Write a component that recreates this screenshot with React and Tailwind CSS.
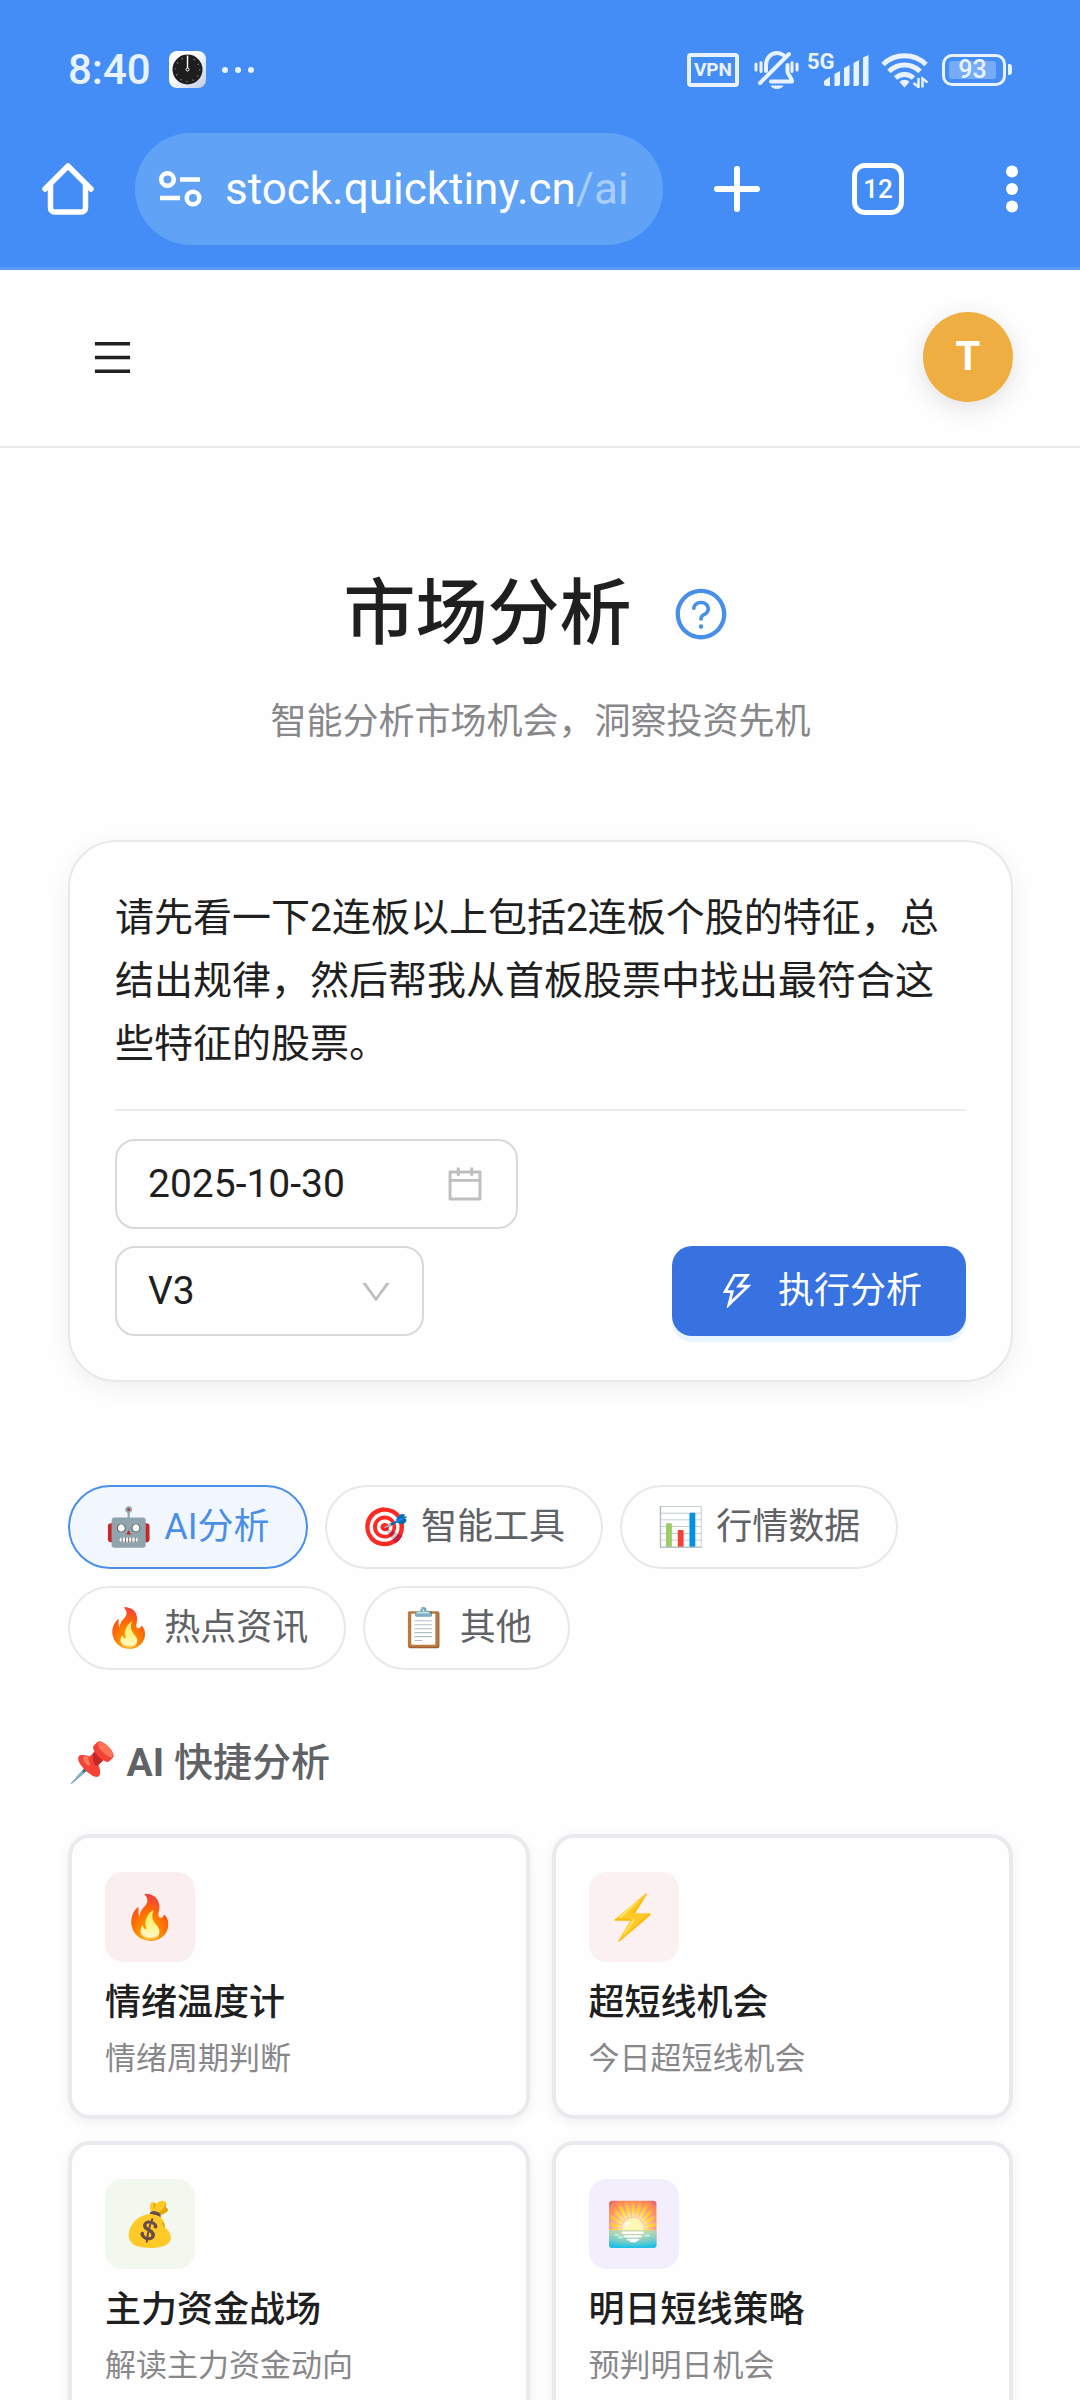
import { useState } from 'react';
import clsx from 'clsx';
import {
  AiOutlineCalendar,
  AiOutlineDown,
  AiOutlineMenu,
  AiOutlineQuestionCircle,
  AiOutlineThunderbolt,
} from 'react-icons/ai';

const tabs = [
  { id: 'ai', icon: '🤖', label: 'AI分析' },
  { id: 'tools', icon: '🎯', label: '智能工具' },
  { id: 'market', icon: '📊', label: '行情数据' },
  { id: 'news', icon: '🔥', label: '热点资讯' },
  { id: 'other', icon: '📋', label: '其他' },
];

const shortcuts = [
  { icon: '🔥', title: '情绪温度计', desc: '情绪周期判断', tint: 'bg-[#fbeeee]' },
  { icon: '⚡', title: '超短线机会', desc: '今日超短线机会', tint: 'bg-[#fbf1f1]' },
  { icon: '💰', title: '主力资金战场', desc: '解读主力资金动向', tint: 'bg-[#f3f8ee]' },
  { icon: '🌅', title: '明日短线策略', desc: '预判明日机会', tint: 'bg-[#f2eefb]' },
];

const ClockIcon = () => (
  <svg width="37" height="37" viewBox="0 0 37 37" aria-hidden="true">
    <defs>
      <linearGradient id="clock-face" x1="0" y1="0" x2="1" y2="1">
        <stop offset="0.4" stopColor="#ffffff" />
        <stop offset="1" stopColor="#bccbe4" />
      </linearGradient>
    </defs>
    <rect width="37" height="37" rx="8" fill="url(#clock-face)" />
    <circle cx="18.500" cy="18.500" r="15" fill="#1e1e1e" />
    <circle cx="18.500" cy="18.500" r="12" fill="none" stroke="#8a8a8a" strokeWidth="1.500" strokeDasharray="1 5.280" />
    <path d="M18.500 17V4.500" stroke="#fff" strokeWidth="1.400" />
    <circle cx="18.500" cy="18.500" r="1.500" fill="none" stroke="#fff" />
  </svg>
);

const MutedBellIcon = () => (
  <svg width="45" height="38" viewBox="0 0 45 38" fill="none" stroke="currentColor" strokeLinecap="round" strokeLinejoin="round" aria-hidden="true">
    <path d="M2 13v6M7 11.500v9M38 11.500v9M43 13v6" strokeWidth="3" />
    <path d="M12 20v-6C12 7 17 2 23 2c3 0 5 1 7 2.500" strokeWidth="4" />
    <path d="M35 3 6 32" strokeWidth="4" />
    <path d="M33.500 14v7c0 2 5 7 4.500 9.500H17" strokeWidth="4" />
    <path d="M16.500 34.500h13c-1 2-3.500 3.500-6.500 3.500s-5.500-1.500-6.500-3.500Z" fill="currentColor" stroke="none" />
  </svg>
);

const SignalIcon = () => (
  <svg width="45" height="34" viewBox="0 0 45 34" fill="currentColor" aria-hidden="true">
    <path d="M0 32v-3l6-4.500V34H2a2 2 0 0 1-2-2ZM10.500 22l5.500-3v13a2 2 0 0 1-2 2h-3.500ZM20 16l5.500-3v19a2 2 0 0 1-2 2H20ZM29.500 11l5.500-3v24a2 2 0 0 1-2 2h-3.500ZM39 5.500l5.500-2.500v29a2 2 0 0 1-2 2H39Z" />
  </svg>
);

const WifiIcon = () => (
  <svg width="47" height="36" viewBox="0 0 47 36" fill="none" stroke="currentColor" strokeWidth="5" aria-hidden="true">
    <path d="M2 12.500a31 31 0 0 1 43 0" />
    <path d="M8 19.500a22 22 0 0 1 31 0" />
    <path d="M14.500 26a13 13 0 0 1 18 0" />
    <path d="M18.500 30c2.500-3 7.500-3 10 0l-5 5.500Z" fill="currentColor" stroke="none" />
    <path d="M37.500 26v9l-5-4M41.500 35.500v-9l5 4" strokeWidth="2.500" />
  </svg>
);

const StatusBar = () => (
  <div className="flex h-[133px] items-center justify-between px-[68px] pt-1.5 text-[#e8f3ff]">
    <div className="flex items-center">
      <span className="text-[42px] leading-none font-medium">8:40</span>
      <span className="ml-[18px]"><ClockIcon /></span>
      <span className="ml-4 flex gap-[7px]">
        <i className="size-1.5 rounded-full bg-current" />
        <i className="size-1.5 rounded-full bg-current" />
        <i className="size-1.5 rounded-full bg-current" />
      </span>
    </div>
    <div className="flex items-center">
      <span className="flex h-[34px] w-[52px] items-center justify-center rounded-[4px] border-4 text-[19px] leading-none font-bold">
        VPN
      </span>
      <span className="ml-[15px]"><MutedBellIcon /></span>
      <span className="ml-2 flex">
        <span className="h-9 w-[17px] text-[22px] leading-5 font-bold whitespace-nowrap">5G</span>
        <SignalIcon />
      </span>
      <span className="ml-3"><WifiIcon /></span>
      <span className="ml-3.5 flex h-8 w-16 rounded-[10px] border-3 p-1">
        <span className="flex w-[47px] items-center justify-center rounded-[3px] bg-[#76abf9] text-[25px] leading-none font-medium">
          93
        </span>
      </span>
      <span className="ml-0.5 h-[11px] w-1 rounded-r-[3px] bg-current" />
    </div>
  </div>
);

const BrowserBar = () => (
  <div className="flex h-28 items-center pr-[50px] pl-[42px] text-white">
    <button type="button" aria-label="主页">
      <svg width="52" height="52" viewBox="0 0 52 52" fill="none" stroke="currentColor" strokeWidth="5.500" strokeLinecap="round" strokeLinejoin="round">
        <path d="M3 26 26 3l23 23" />
        <path d="M8.500 21v24a4 4 0 0 0 4 4h27a4 4 0 0 0 4-4V21" />
      </svg>
    </button>
    <button type="button" className="ml-[41px] flex h-28 min-w-0 flex-1 items-center rounded-full bg-[#60a2f6] pl-6 text-left">
      <svg width="43" height="36" viewBox="0 0 43 36" fill="none" stroke="currentColor" strokeWidth="4.500" aria-hidden="true">
        <circle cx="8.500" cy="8.500" r="6.300" />
        <path d="M21 8.500h20M1 27h20" />
        <circle cx="34" cy="27" r="6.300" />
      </svg>
      <span className="ml-[23px] text-[44px] leading-none whitespace-nowrap">
        stock.quicktiny.cn<span className="text-[#a9cdfb]">/ai</span>
      </span>
    </button>
    <button type="button" aria-label="新标签页" className="ml-[50px]">
      <svg width="48" height="48" viewBox="0 0 48 48" stroke="currentColor" strokeWidth="6" strokeLinecap="round">
        <path d="M24 4v40M4 24h40" />
      </svg>
    </button>
    <button type="button" aria-label="标签页" className="ml-[91px] flex size-[52px] items-center justify-center rounded-[13px] border-[5px] text-[26px] leading-none font-medium">
      12
    </button>
    <button type="button" aria-label="更多" className="ml-[90px]">
      <svg width="36" height="48" viewBox="0 0 36 48" fill="currentColor">
        <circle cx="18" cy="6.500" r="6" />
        <circle cx="18" cy="24" r="6" />
        <circle cx="18" cy="41.500" r="6" />
      </svg>
    </button>
  </div>
);

const SiteHeader = () => (
  <header className="flex h-[178px] shrink-0 items-center justify-between border-b-2 border-[#e8e8ea] pr-[67px] pb-0.5 pl-[90px]">
    <button type="button" aria-label="菜单" className="text-[#1f1f1f]">
      <AiOutlineMenu size={45} />
    </button>
    <button type="button" className="size-[90px] rounded-full bg-[#efae41] text-[40px] leading-none font-bold text-white shadow-[0_6px_24px_rgba(0,0,0,0.12)]">
      T
    </button>
  </header>
);

const AnalysisForm = () => {
  const [prompt, setPrompt] = useState(
    '请先看一下2连板以上包括2连板个股的特征，总结出规律，然后帮我从首板股票中找出最符合这些特征的股票。'
  );
  const [date, setDate] = useState('2025-10-30');

  return (
    <form className="mt-[90px] rounded-[48px] border-2 border-[#e8e8ea] px-[45px] pt-[45px] pb-11 shadow-[0_6px_24px_rgba(0,0,0,0.06)]">
      <textarea
        rows={3}
        aria-label="分析内容"
        value={prompt}
        onChange={(e) => setPrompt(e.target.value)}
        className="block w-full resize-none overflow-hidden text-[39px] leading-[63px] outline-none"
      />
      <div className="mt-[33px] flex flex-col gap-[17px] border-t-2 border-[#ededef] pt-7">
        <label className="flex h-[90px] w-[403px] items-center rounded-[20px] border-2 border-[#d9d9d9] pr-[30px] pl-[31px]">
          <input
            type="text"
            aria-label="日期"
            value={date}
            onChange={(e) => setDate(e.target.value)}
            className="w-full min-w-0 text-[39px] outline-none"
          />
          <AiOutlineCalendar size={42} className="shrink-0 text-[#bfbfbf]" />
        </label>
        <div className="flex items-center justify-between">
          <div className="relative w-[309px]">
            <select
              aria-label="模型版本"
              className="h-[90px] w-full appearance-none rounded-[20px] border-2 border-[#d9d9d9] pl-[31px] text-[39px] outline-none"
            >
              <option>V3</option>
            </select>
            <AiOutlineDown size={36} className="pointer-events-none absolute top-7 right-[30px] text-[#bfbfbf]" />
          </div>
          <button
            type="button"
            className="flex h-[90px] items-center gap-5 rounded-[20px] bg-[#3872e0] px-11 text-[36px] text-white shadow-[0_6px_0_#e9f5fe]"
          >
            <AiOutlineThunderbolt size={42} />
            执行分析
          </button>
        </div>
      </div>
    </form>
  );
};

const CategoryTabs = () => {
  const [active, setActive] = useState('ai');

  return (
    <nav className="mt-[103px] flex flex-wrap gap-[17px]">
      {tabs.map((tab) => (
        <button
          key={tab.id}
          type="button"
          onClick={() => setActive(tab.id)}
          className={clsx(
            'flex h-[84px] items-center gap-3 rounded-full border-2 pr-9 pl-[35px] text-[36px]',
            active === tab.id
              ? 'border-[#4a8fe7] bg-[#f2f7ff] text-[#4a8fe7]'
              : 'border-[#e8e8ea] text-[#606266]'
          )}
        >
          <span className="text-[38px]">{tab.icon}</span>
          <span>{tab.label}</span>
        </button>
      ))}
    </nav>
  );
};

const ShortcutCard = ({ item }) => (
  <button
    type="button"
    className="flex h-[285px] flex-col items-start rounded-[22px] border-4 border-[#e8eaee] px-[33px] pt-[34px] text-left shadow-[0_3px_12px_rgba(0,0,0,0.06)]"
  >
    <span className={clsx('flex size-[90px] items-center justify-center rounded-[18px] text-[43px] leading-none', item.tint)}>
      {item.icon}
    </span>
    <span className="mt-3.5 text-[36px] leading-[54px] font-medium">{item.title}</span>
    <span className="mt-1.5 text-[31px] leading-[46px] text-[#88888b]">{item.desc}</span>
  </button>
);

export default function App() {
  return (
    <div className="flex h-screen flex-col overflow-hidden bg-[#fefefe] font-['Roboto','Noto_Sans_CJK_SC','Noto_Color_Emoji',sans-serif] text-[#1f1f1f]">
      <div className="h-[270px] shrink-0 border-b-3 border-[#5b9bf5] bg-[#448df6]">
        <StatusBar />
        <BrowserBar />
      </div>
      <SiteHeader />
      <main className="min-h-0 flex-1 overflow-hidden pt-[116px] pr-[67px] pb-16 pl-[68px]">
        <div className="flex items-center justify-center gap-10 pr-2">
          <h1 className="text-[72px] leading-[100px] font-medium">市场分析</h1>
          <button type="button" aria-label="帮助" className="text-[#4a8fe7]">
            <AiOutlineQuestionCircle size={58} />
          </button>
        </div>
        <p className="mt-[30px] text-center text-[36px] leading-[56px] text-[#88888b]">
          智能分析市场机会，洞察投资先机
        </p>
        <AnalysisForm />
        <CategoryTabs />
        <section>
          <h2 className="mt-[63px] flex gap-2.5 text-[39px] leading-[60px] font-medium text-[#606266]">
            <span>📌</span>
            <span>
              <b>AI</b> 快捷分析
            </span>
          </h2>
          <div className="mt-[41px] grid grid-cols-2 gap-[22px]">
            {shortcuts.map((item) => (
              <ShortcutCard key={item.title} item={item} />
            ))}
          </div>
        </section>
      </main>
    </div>
  );
}
